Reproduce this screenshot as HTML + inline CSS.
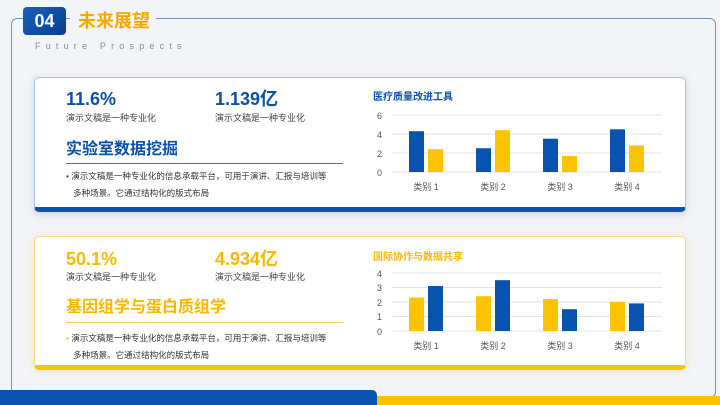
<!DOCTYPE html>
<html><head><meta charset="utf-8"><style>
*{margin:0;padding:0;box-sizing:border-box}
body{width:720px;height:405px;overflow:hidden;background:#f3f4f7;font-family:"Liberation Sans","Noto Sans CJK SC",sans-serif;position:relative}
.a{position:absolute;white-space:nowrap}
.frame{position:absolute;left:11px;top:18px;width:705px;height:380px;border:1px solid #6f93cc;border-radius:6px}
.card{position:absolute;left:34px;width:652px;background:#fff;border-radius:5px}
.num{font-weight:bold;font-size:18px;line-height:22px;height:22px}
.sub{font-size:9px;color:#444;line-height:12px}
.h{font-weight:bold;font-size:16px;line-height:20px}
.b{font-size:8.5px;color:#333;line-height:17px}
</style></head><body>
<div class="frame"></div>
<div class="a" style="left:70px;top:14px;width:86px;height:10px;background:#f3f4f7"></div>
<div class="a" style="left:23px;top:7px;width:43px;height:28px;border-radius:4px;background:linear-gradient(135deg,#1660c0,#0b3f8c);color:#fff;font-weight:bold;font-size:18px;text-align:center;line-height:28px">04</div>
<div class="a" style="left:78px;top:9px;font-size:18px;font-weight:bold;color:#f5a800;line-height:24px">未来展望</div>
<div class="a" style="left:35px;top:41px;font-size:9px;letter-spacing:5.2px;color:#888">Future Prospects</div>

<div class="card" style="top:77px;height:135px;border:1px solid #a9c3ea;border-bottom:5px solid #0a52b0;box-shadow:0 2px 8px rgba(80,120,180,.25)"></div>
<div class="a num" style="left:66px;top:88px;color:#0a4fa8">11.6%</div>
<div class="a sub" style="left:66px;top:112px">演示文稿是一种专业化</div>
<div class="a num" style="left:215px;top:88px;color:#0a4fa8">1.139亿</div>
<div class="a sub" style="left:215px;top:112px">演示文稿是一种专业化</div>
<div class="a h" style="left:66px;top:140px;color:#0a4fa8">实验室数据挖掘</div>
<div class="a" style="left:66px;top:163px;width:277px;height:1px;background:#3f73c2"></div>
<div class="a b" style="left:66px;top:168px"><span style="color:#0a4fa8">•</span> 演示文稿是一种专业化的信息承载平台，可用于演讲、汇报与培训等<br>&nbsp;&nbsp;&nbsp;多种场景。它通过结构化的版式布局</div>
<div class="a" style="left:373px;top:88px;font-size:10px;font-weight:bold;color:#0a4fa8">医疗质量改进工具</div>

<div class="card" style="top:236px;height:134px;border:1px solid #f7dc8a;border-bottom:5px solid #fbc300;box-shadow:0 2px 8px rgba(240,190,40,.25)"></div>
<div class="a num" style="left:66px;top:248px;color:#f8b800">50.1%</div>
<div class="a sub" style="left:66px;top:271px">演示文稿是一种专业化</div>
<div class="a num" style="left:215px;top:248px;color:#f8b800">4.934亿</div>
<div class="a sub" style="left:215px;top:271px">演示文稿是一种专业化</div>
<div class="a h" style="left:66px;top:298px;color:#f8b800">基因组学与蛋白质组学</div>
<div class="a" style="left:66px;top:322px;width:277px;height:1px;background:#f8cf55"></div>
<div class="a b" style="left:66px;top:330px"><span style="color:#f8b800">•</span> 演示文稿是一种专业化的信息承载平台，可用于演讲、汇报与培训等<br>&nbsp;&nbsp;&nbsp;多种场景。它通过结构化的版式布局</div>
<div class="a" style="left:373px;top:248px;font-size:10px;font-weight:bold;color:#f8b800">国际协作与数据共享</div>

<svg class="a" style="left:0;top:0" width="720" height="405" font-family="Liberation Sans,Noto Sans CJK SC,sans-serif" font-size="9" fill="#555">
<g stroke="#e3e3e3" stroke-width="1">
<line x1="392" x2="662" y1="115" y2="115"/><line x1="392" x2="662" y1="134" y2="134"/><line x1="392" x2="662" y1="153" y2="153"/><line x1="392" x2="662" y1="172" y2="172"/>
<line x1="392" x2="662" y1="273" y2="273"/><line x1="392" x2="662" y1="287.5" y2="287.5"/><line x1="392" x2="662" y1="302" y2="302"/><line x1="392" x2="662" y1="316.5" y2="316.5"/><line x1="392" x2="662" y1="331" y2="331"/>
</g>
<text x="377" y="119">6</text><text x="377" y="138">4</text><text x="377" y="157">2</text><text x="377" y="176">0</text>
<text x="377" y="277">4</text><text x="377" y="291">3</text><text x="377" y="306">2</text><text x="377" y="320">1</text><text x="377" y="335">0</text>
<rect x="409" y="131.2" width="15" height="40.8" fill="#0a52b0"/><rect x="428" y="149.2" width="15" height="22.8" fill="#fbc300"/>
<rect x="476" y="148.2" width="15" height="23.8" fill="#0a52b0"/><rect x="495" y="130.2" width="15" height="41.8" fill="#fbc300"/>
<rect x="543" y="138.7" width="15" height="33.3" fill="#0a52b0"/><rect x="562" y="155.9" width="15" height="16.1" fill="#fbc300"/>
<rect x="610" y="129.3" width="15" height="42.7" fill="#0a52b0"/><rect x="629" y="145.4" width="15" height="26.6" fill="#fbc300"/>
<rect x="409" y="297.6" width="15" height="33.4" fill="#fbc300"/><rect x="428" y="286" width="15" height="45" fill="#0a52b0"/>
<rect x="476" y="296.2" width="15" height="34.8" fill="#fbc300"/><rect x="495" y="280.2" width="15" height="50.8" fill="#0a52b0"/>
<rect x="543" y="299.1" width="15" height="31.9" fill="#fbc300"/><rect x="562" y="309.2" width="15" height="21.8" fill="#0a52b0"/>
<rect x="610" y="302" width="15" height="29" fill="#fbc300"/><rect x="629" y="303.4" width="15" height="27.6" fill="#0a52b0"/>
<g text-anchor="middle"><text x="426" y="190">类别 1</text><text x="493" y="190">类别 2</text><text x="560" y="190">类别 3</text><text x="627" y="190">类别 4</text>
<text x="426" y="349">类别 1</text><text x="493" y="349">类别 2</text><text x="560" y="349">类别 3</text><text x="627" y="349">类别 4</text></g>
</svg>
<div class="a" style="left:0;top:390px;width:377px;height:15px;background:#0a52b0;border-top-right-radius:5px"></div>
<div class="a" style="left:377px;top:396px;width:343px;height:9px;background:#fbc300"></div>
</body></html>
